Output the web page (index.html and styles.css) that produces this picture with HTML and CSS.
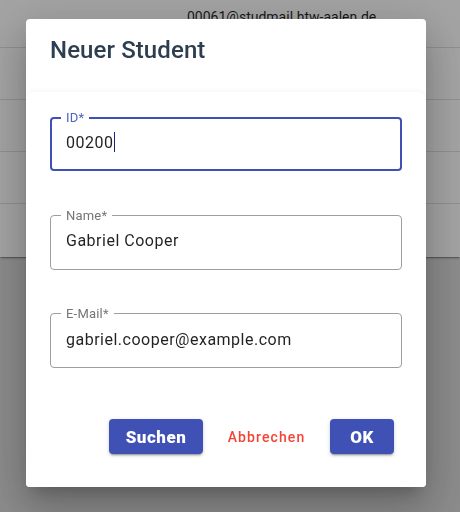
FILE: index.html
```html
<!DOCTYPE html>
<html lang="de">
<head>
<meta charset="utf-8">
<title>Neuer Student</title>
<link rel="stylesheet" href="styles.css">
</head>
<body>
<div class="page">
  <div class="table">
    <div class="row row-first"><span class="cell-mail">00061@studmail.htw-aalen.de</span></div>
    <div class="row"><span class="cell-mail">00062@studmail.htw-aalen.de</span></div>
    <div class="row"><span class="cell-mail">00063@studmail.htw-aalen.de</span></div>
    <div class="row"><span class="cell-mail">00064@studmail.htw-aalen.de</span></div>
    <div class="row row-last"><span class="cell-mail">00065@studmail.htw-aalen.de</span></div>
  </div>
</div>
<div class="overlay">
  <div class="dialog">
    <h2 class="dialog-title">Neuer Student</h2>
    <div class="dialog-card">
      <div class="fields">
        <div class="field field-focused">
          <span class="field-label">ID*</span>
          <span class="field-value">00200<span class="caret"></span></span>
        </div>
        <div class="field">
          <span class="field-label">Name*</span>
          <span class="field-value">Gabriel Cooper</span>
        </div>
        <div class="field">
          <span class="field-label">E-Mail*</span>
          <span class="field-value">gabriel.cooper@example.com</span>
        </div>
      </div>
      <div class="actions">
        <button class="btn btn-contained btn-search">Suchen</button>
        <button class="btn btn-text">Abbrechen</button>
        <button class="btn btn-contained btn-ok">OK</button>
      </div>
    </div>
  </div>
</div>
</body>
</html>
```
FILE: styles.css
```css
* { box-sizing: border-box; }
html, body { margin: 0; padding: 0; }
body {
  width: 460px;
  height: 512px;
  overflow: hidden;
  font-family: Roboto, "Liberation Sans", sans-serif;
  background: #dadada;
}
.page { padding: 0; }
.table {
  background: #fff;
  box-shadow: 0 2px 1px -1px rgba(0,0,0,0.25), 0 1px 3px rgba(0,0,0,0.2);
}
.row {
  height: 52px;
  border-bottom: 1px solid #e0e0e0;
  display: flex;
  align-items: center;
  padding-left: 187px;
  font-size: 14px;
  color: rgba(0,0,0,0.87);
}
.row-first { height: 48px; align-items: flex-start; padding-top: 9px; }
.row-last { height: 53px; border-bottom: none; }
.overlay {
  position: fixed;
  inset: 0;
  background: rgba(0,0,0,0.36);
  padding: 19px 34px 25px 26px;
  display: flex;
  flex-direction: column;
}
.dialog {
  width: 400px;
  height: 468px;
  background: #fff;
  border-radius: 4px;
  box-shadow: 0 11px 15px -7px rgba(0,0,0,0.2), 0 24px 38px 3px rgba(0,0,0,0.14), 0 9px 46px 8px rgba(0,0,0,0.12);
  display: flex;
  flex-direction: column;
  overflow: hidden;
}
.dialog-title {
  margin: 0;
  padding: 15px 24px 0;
  height: 73px;
  font-size: 24px;
  line-height: 32px;
  font-weight: 500;
  letter-spacing: 0.1px;
  color: #2c3e50;
}
.dialog-card {
  flex: 1;
  background: #fff;
  border-radius: 8px 8px 0 0;
  box-shadow: 0 -2px 4px rgba(0,0,0,0.035);
  padding: 25px 24px 0;
  display: flex;
  flex-direction: column;
}
.fields {
  display: flex;
  flex-direction: column;
  gap: 43.5px;
}
.field {
  position: relative;
  height: 55px;
  border: 1px solid #9e9e9e;
  border-radius: 4px;
  padding: 0 15px 3px;
  display: flex;
  align-items: center;
}
.field-focused {
  border: 2px solid #3f51b5;
  padding: 0 14px 4px;
  height: 54px;
}
.field-label {
  position: absolute;
  top: -8px;
  left: 10px;
  padding: 0 5px;
  background: #fff;
  font-size: 13px;
  line-height: 15px;
  letter-spacing: 0.2px;
  color: #757575;
}
.field-focused .field-label {
  top: -9px;
  left: 9px;
  color: #5162c0;
}
.field-value {
  font-size: 16px;
  color: rgba(0,0,0,0.87);
  letter-spacing: 0.5px;
  display: inline-flex;
  align-items: center;
}
.caret {
  display: inline-block;
  width: 1px;
  height: 20px;
  background: #1a237e;
  margin-left: 1px;
}
.actions {
  display: flex;
  justify-content: flex-end;
  gap: 8px;
  margin-top: 51px;
  padding-right: 8px;
}
.btn {
  height: 35px;
  border: none;
  border-radius: 4px;
  font-family: Roboto, "Liberation Sans", sans-serif;
  cursor: pointer;
}
.btn-contained {
  background: #3f51b5;
  color: #fff;
  font-size: 17px;
  font-weight: 900;
  letter-spacing: 0.5px;
  box-shadow: 0 3px 1px -2px rgba(0,0,0,0.2), 0 2px 2px rgba(0,0,0,0.14), 0 1px 5px rgba(0,0,0,0.12);
}
.btn-search { width: 94px; }
.btn-ok { width: 64px; }
.btn-text {
  width: 111px;
  background: transparent;
  color: #f44336;
  font-size: 14px;
  font-weight: 500;
  letter-spacing: 1.1px;
}
```
